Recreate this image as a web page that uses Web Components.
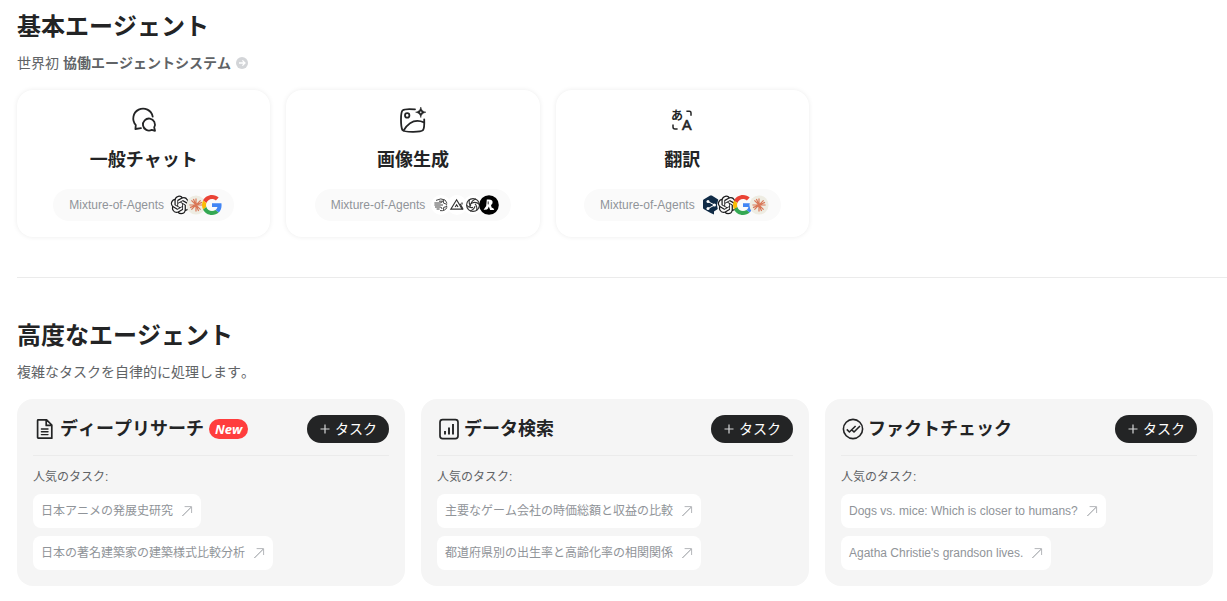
<!DOCTYPE html>
<html lang="ja">
<head>
<meta charset="utf-8">
<meta name="viewport" content="width=device-width, initial-scale=1">
<title>エージェント</title>
<style>
  body {
    margin: 0;
    background: #fff;
    color: #232425;
    font-family: "Liberation Sans", "Noto Sans CJK JP", sans-serif;
    font-size: 14px;
    font-kerning: none;
  }
</style>
</head>
<body>
<agents-page></agents-page>

<script>
const ICONS = {
  chat: ['0 0 30 30', `<g fill="none" stroke="#232425" stroke-width="1.8" stroke-linecap="round" stroke-linejoin="round">
    <path d="M23.7 11.6A9.8 9.8 0 1 0 6.8 20L6.4 24L12 23.2"/>
    <path d="M25.2 22.4A6 6 0 1 0 22.8 24.8L26 25.8Z"/></g>`],
  image: ['0 0 30 30', `<g fill="none" stroke="#232425" stroke-width="1.8" stroke-linecap="round" stroke-linejoin="round">
    <path d="M17 4.4C11 3.8 6.4 4 4.6 5.4C2.4 7.4 2.6 21.4 4.4 25C6.4 27.4 22.6 27.6 25 25.2C26.4 23.4 26.4 18.6 26.2 14.4"/>
    <path d="M5.6 25.4C10 18.4 17 13.4 26 17.4"/><circle cx="9.2" cy="10.4" r="2.2"/></g>
    <path fill="#232425" stroke="#232425" stroke-width=".5" fill-rule="evenodd" d="M22.8 2C23.4 5.2 24.6 6.4 28 7.2C24.6 8 23.4 9.2 22.8 12.6C22.2 9.2 21 8 17.6 7.2C21 6.4 22.2 5.2 22.8 2ZM22.8 6L21.6 7.2L22.8 8.5L24 7.2Z"/>`],
  translate: ['0 0 30 30', `<text x="4" y="15" font-size="12" font-weight="700" fill="#232425" font-family="Noto Sans CJK JP, sans-serif">あ</text>
    <text x="15" y="25" font-size="15" font-weight="400" fill="#232425" stroke="#232425" stroke-width=".6" font-family="Noto Sans, sans-serif">A</text>
    <path d="M19.4 6.2H22.4Q24 6.2 24 7.8V10.8M6 19.4V22Q6 24 8 24H10.6" fill="none" stroke="#232425" stroke-width="1.5"/>`],
  file: ['0 0 24 24', `<g fill="none" stroke="#232425" stroke-width="1.7" stroke-linejoin="round" stroke-linecap="round">
    <path d="M5.2 2.8H13.6L18.8 8V21.2H5.2Q4.6 21.2 4.6 20.6V3.4Q4.6 2.8 5.2 2.8ZM13.2 3V8.4H18.6"/><path stroke-width="1.4" d="M8.4 12H15M8.4 14.8H15M8.4 17.6H15"/></g>`],
  chart: ['0 0 24 24', `<rect x="3" y="2.6" width="18" height="19" rx="2.6" fill="none" stroke="#232425" stroke-width="1.7"/>
    <path d="M8 14V17.4M12 10.6V17.4M16 7V17.4" stroke="#232425" stroke-width="1.9"/>`],
  check: ['0 0 24 24', `<circle cx="12" cy="12" r="9.6" fill="none" stroke="#232425" stroke-width="1.6"/>
    <path d="M5.8 12.4L8.4 15L14.6 9M11.2 13.2L13 15L19 9" fill="none" stroke="#232425" stroke-width="1.6" stroke-linejoin="round"/>`],
  plus: ['0 0 12 12', `<path d="M6 1.5V10.5M1.5 6H10.5" stroke="#d5d6d7" stroke-width="1.2"/>`],
  diagonal: ['0 0 12 12', `<path d="M1.4 11L10.4 2" stroke="#909499" stroke-width="1"/><path d="M3.6 1.6H10.6V8" fill="none" stroke="#b4b7ba" stroke-width="1"/>`],
  go: ['0 0 12 12', `<circle cx="6" cy="6" r="6" fill="#d3d5d8"/><path d="M3 6H9M6.4 3.4L9 6L6.4 8.6" fill="none" stroke="#fff" stroke-width="1.3"/>`],
  openai: ['0 0 20 20', `<circle cx="10" cy="10" r="10" fill="#fafafa"/><g transform="translate(.8 .6) scale(.78)"><path fill="#1b1b1c" d="M22.2819 9.8211a5.9847 5.9847 0 0 0-.5157-4.9108 6.0462 6.0462 0 0 0-6.5098-2.9A6.0651 6.0651 0 0 0 4.9807 4.1818a5.9847 5.9847 0 0 0-3.9977 2.9 6.0462 6.0462 0 0 0 .7427 7.0966 5.98 5.98 0 0 0 .511 4.9107 6.051 6.051 0 0 0 6.5146 2.9001A5.9847 5.9847 0 0 0 13.2599 24a6.0557 6.0557 0 0 0 5.7718-4.2058 5.9894 5.9894 0 0 0 3.9977-2.9001 6.0557 6.0557 0 0 0-.7475-7.0729zm-9.022 12.6081a4.4755 4.4755 0 0 1-2.8764-1.0408l.1419-.0804 4.7783-2.7582a.7948.7948 0 0 0 .3927-.6813v-6.7369l2.02 1.1686a.071.071 0 0 1 .038.052v5.5826a4.504 4.504 0 0 1-4.4945 4.4944zm-9.6607-4.1254a4.4708 4.4708 0 0 1-.5346-3.0137l.142.0852 4.783 2.7582a.7712.7712 0 0 0 .7806 0l5.8428-3.3685v2.3324a.0804.0804 0 0 1-.0332.0615L9.74 19.9502a4.4992 4.4992 0 0 1-6.1408-1.6464zM2.3408 7.8956a4.485 4.485 0 0 1 2.3655-1.9728V11.6a.7664.7664 0 0 0 .3879.6765l5.8144 3.3543-2.0201 1.1685a.0757.0757 0 0 1-.071 0l-4.8303-2.7865A4.504 4.504 0 0 1 2.3408 7.872zm16.5963 3.8558L13.1038 8.364 15.1192 7.2a.0757.0757 0 0 1 .071 0l4.8303 2.7913a4.4944 4.4944 0 0 1-.6765 8.1042v-5.6772a.79.79 0 0 0-.407-.667zm2.0107-3.0231l-.142-.0852-4.7735-2.7818a.7759.7759 0 0 0-.7854 0L9.409 9.2297V6.8974a.0662.0662 0 0 1 .0284-.0615l4.8303-2.7866a4.4992 4.4992 0 0 1 6.6802 4.66zM8.3065 12.863l-2.02-1.1638a.0804.0804 0 0 1-.038-.0567V6.0742a4.4992 4.4992 0 0 1 7.3757-3.4537l-.142.0805L8.704 5.459a.7948.7948 0 0 0-.3927.6813zm1.0976-2.3654l2.602-1.4998 2.6069 1.4998v2.9994l-2.5974 1.4997-2.6067-1.4997Z"/></g>`],
  claude: ['0 0 20 20', `<circle cx="10" cy="10" r="9.6" fill="#eeece2"/>
    <path d="M10 3.4V16.6M3.4 10H16.6M5.4 5.4L14.6 14.6M14.6 5.4L5.4 14.6M7.4 4L12.6 16M16 7.4L4 12.6" stroke="#d97757" stroke-width="1.2"/>`],
  google: ['0 0 48 48', `<path fill="#EA4335" d="M24 9.5c3.54 0 6.71 1.22 9.21 3.6l6.85-6.85C35.9 2.38 30.47 0 24 0 14.62 0 6.51 5.38 2.56 13.22l7.98 6.19C12.43 13.72 17.74 9.5 24 9.5z"/>
    <path fill="#4285F4" d="M46.98 24.55c0-1.57-.15-3.09-.38-4.55H24v9.02h12.94c-.58 2.96-2.26 5.48-4.78 7.18l7.73 6c4.51-4.18 7.09-10.36 7.09-17.65z"/>
    <path fill="#FBBC05" d="M10.53 28.59c-.48-1.45-.76-2.99-.76-4.59s.27-3.14.76-4.59l-7.98-6.19C.92 16.46 0 20.12 0 24c0 3.88.92 7.54 2.56 10.78l7.97-6.19z"/>
    <path fill="#34A853" d="M24 48c6.48 0 11.93-2.13 15.89-5.81l-7.73-6c-2.15 1.45-4.92 2.3-8.16 2.3-6.26 0-11.57-4.22-13.47-9.91l-7.98 6.19C6.51 42.62 14.62 48 24 48z"/>`],
  waves: ['0 0 20 20', `<circle cx="10" cy="10" r="10" fill="#fff"/><g fill="none" stroke="#444" stroke-width="1">
    <path d="M5 5.4Q10 2.6 14 5Q17.4 8 16 12.4Q14 16.4 9 15.6M3.4 8H9Q11 8 11 6.4M3.4 10H12M4 12H9Q11 12 11 14M5.6 14H8.6"/><path d="M12.4 5V8L16 9.4M12.6 15V12.4L16.4 11.4M8 6.2H12"/></g>`],
  triangle: ['0 0 20 20', `<circle cx="10" cy="10" r="10" fill="#fff"/><g fill="none" stroke="#333" stroke-width="1.2">
    <path d="M3.8 14.2L9.6 4.8L15.2 14.2Z"/><path d="M8.2 12L9.6 9.8L11 12M13 8.8L16.2 14.4M15 7.4V9.6"/></g>`],
  spiral: ['0 0 20 20', `<circle cx="10" cy="10" r="10" fill="#fff"/><g fill="none" stroke="#333" stroke-width="1.1"><circle cx="10" cy="10" r="6.4"/>
    <path d="M10 7.6Q13.4 6.6 16.6 9.6M10 7.6Q6.8 8.4 6.8 12"/><path d="M12 8.8Q14.6 11.2 13.6 15.6M12 11.2Q11.2 14.6 7 16M10 12.4Q6.6 13.4 3.6 10.4M8 11.2Q5.4 8.8 6.4 4.4M8 8.8Q8.8 5.4 13 4"/></g>`],
  person: ['0 0 20 20', `<circle cx="10" cy="10" r="9.8" fill="#000"/>
    <path fill="#fff" d="M7.8 4.6Q13.6 3.6 13.6 7.2Q13.6 9.2 12 10L12.6 12.4Q14.8 12.6 15.2 15H11.2L9.8 11.4L9 13.6Q8.6 15 4.6 14.8L7.2 11Z"/><path d="M9.2 6.4V9.4" stroke="#000" stroke-width=".8"/>`],
  hexagon: ['0 0 20 20', `<path fill="#102b46" d="M9.2 .6Q10 .2 10.8 .6L17.2 4.4V13.8L13 16.4V19.4L9.6 18L2.6 14Q2 13.6 2 12.8V5.6Q2 4.8 2.6 4.4Z"/>
    <path d="M7 6.6L13.6 10L7 13.6" fill="none" stroke="#fff" stroke-width="1"/><g fill="#fff"><circle cx="7" cy="6.4" r="1.5"/><circle cx="13.4" cy="10" r="1.6"/><circle cx="7" cy="13.4" r="1.5"/></g>`]
};

class AppIcon extends HTMLElement {
  connectedCallback() {
    const [box, art] = ICONS[this.getAttribute('name')];
    const root = this.shadowRoot || this.attachShadow({ mode: 'open' });
    root.innerHTML = `<style>
      :host { display: block; flex: none; width: var(--icon-size, 20px); height: var(--icon-size, 20px); }
      svg { display: block; width: 100%; height: 100%; }
    </style><svg viewBox="${box}" aria-hidden="true">${art}</svg>`;
  }
}
customElements.define('app-icon', AppIcon);

class AgentSection extends HTMLElement {
  constructor() {
    super();
    this.attachShadow({ mode: 'open' }).innerHTML = `<style>
      :host { display: block; padding-right: 14px; }
      h2 { margin: 0; font-size: 24px; line-height: 36px; font-weight: 700; }
      .sub { display: flex; align-items: center; margin: 8px 0 17px; color: #606366; font-size: 14px; line-height: 20px; }
      .grid { display: grid; grid-template-columns: repeat(3, minmax(0, 1fr)); gap: 16px; }
    </style>
    <h2><slot name="heading"></slot></h2>
    <div class="sub"><slot name="sub"></slot></div>
    <div class="grid"><slot></slot></div>`;
  }
}
customElements.define('agent-section', AgentSection);

class SystemLink extends HTMLElement {
  constructor() {
    super();
    this.attachShadow({ mode: 'open' }).innerHTML = `<style>
      :host { display: block; --icon-size: 12px; }
      p { margin: 0; display: flex; gap: 4px; }
      a { display: flex; align-items: center; gap: 5px; color: inherit; font-weight: 700; text-decoration: none; }
    </style>
    <p><span>世界初</span> <a href="#system">協働エージェントシステム<app-icon name="go"></app-icon></a></p>`;
  }
}
customElements.define('system-link', SystemLink);

class BasicAgents extends HTMLElement {
  constructor() {
    super();
    this.attachShadow({ mode: 'open' }).innerHTML = `<style>
      :host { display: grid; grid-column: span 2; grid-template-columns: repeat(3, minmax(0, 1fr)); gap: 16px; }
    </style><slot></slot>`;
  }
}
customElements.define('basic-agents', BasicAgents);

class BasicCard extends HTMLElement {
  connectedCallback() {
    const models = this.getAttribute('models').split(' ');
    const root = this.shadowRoot || this.attachShadow({ mode: 'open' });
    root.innerHTML = `<style>
      :host { display: block; }
      a { display: flex; flex-direction: column; align-items: center; padding: 15px 16px 16px; border-radius: 16px;
          background: #fff; box-shadow: 0 0 5px rgba(0, 0, 0, .08); color: #232425; text-decoration: none; }
      .main { --icon-size: 30px; }
      h3 { margin: 13px 0 17px; font-size: 18px; line-height: 24px; font-weight: 700; }
      .mix { display: flex; align-items: center; gap: 6px; padding: 6px 12px 6px 16px; border-radius: 16px;
             background: #fafafa; color: #909499; font-size: 12px; line-height: 20px; white-space: nowrap; }
      .models { display: flex; }
      .models app-icon + app-icon { margin-left: -4px; }
    </style>
    <a href="#agent">
      <app-icon class="main" name="${this.getAttribute('icon')}"></app-icon>
      <h3><slot></slot></h3>
      <div class="mix"><span>Mixture-of-Agents</span>
        <div class="models">${models.map(m => `<app-icon name="${m}"></app-icon>`).join('')}</div>
      </div>
    </a>`;
  }
}
customElements.define('basic-card', BasicCard);

class NewBadge extends HTMLElement {
  constructor() {
    super();
    this.attachShadow({ mode: 'open' }).innerHTML = `<style>
      :host { display: block; padding: 0 6px; border-radius: 10px; background: #ff3d3d; color: #fff;
              font: italic 700 13px/20px "Open Sans", sans-serif; }
    </style><slot></slot>`;
  }
}
customElements.define('new-badge', NewBadge);

class TaskCard extends HTMLElement {
  connectedCallback() {
    const root = this.shadowRoot || this.attachShadow({ mode: 'open' });
    root.innerHTML = `<style>
      :host { display: block; box-sizing: border-box; padding: 16px; border-radius: 16px; background: #f5f5f5; }
      header { display: flex; align-items: center; gap: 3px; padding-bottom: 12px; border-bottom: 1px solid #ebebeb; }
      header > app-icon { --icon-size: 24px; }
      h3 { margin: 0 2px 0 0; font-size: 18px; line-height: 28px; font-weight: 700; white-space: nowrap; }
      button { display: flex; align-items: center; gap: 4px; height: 28px; margin: 0 0 0 auto; padding: 0 12px;
               border: 0; border-radius: 14px; background: #232425; color: #fff; font: inherit; font-size: 14px;
               line-height: 20px; white-space: nowrap; --icon-size: 12px; }
      p { margin: 11px 0 7px; color: #606366; font-size: 12px; line-height: 20px; }
      .list { display: flex; flex-direction: column; align-items: flex-start; gap: 8px; }
    </style>
    <header>
      <app-icon name="${this.getAttribute('icon')}"></app-icon>
      <h3><slot name="name"></slot></h3>
      <slot name="badge"></slot>
      <button type="button"><app-icon name="plus"></app-icon>タスク</button>
    </header>
    <p>人気のタスク:</p>
    <div class="list"><slot></slot></div>`;
  }
}
customElements.define('task-card', TaskCard);

class TaskLink extends HTMLElement {
  constructor() {
    super();
    this.attachShadow({ mode: 'open' }).innerHTML = `<style>
      :host { display: block; --icon-size: 12px; }
      a { display: flex; align-items: center; gap: 8px; padding: 8px; border-radius: 8px; background: #fff;
          color: #909499; font-size: 12px; line-height: 18px; text-decoration: none; }
    </style><a href="#task"><span><slot></slot></span><app-icon name="diagonal"></app-icon></a>`;
  }
}
customElements.define('task-link', TaskLink);

class AgentsPage extends HTMLElement {
  constructor() {
    super();
    this.attachShadow({ mode: 'open' }).innerHTML = `<style>
      :host { display: block; }
      main { padding: 9px 0 15px 17px; }
      hr { margin: 40px 0; border: 0; border-top: 1px solid #ebebeb; }
    </style>
    <main>
      <agent-section>
        <span slot="heading">基本エージェント</span>
        <system-link slot="sub"></system-link>
        <basic-agents>
          <basic-card icon="chat" models="openai claude google">一般チャット</basic-card>
          <basic-card icon="image" models="waves triangle spiral person">画像生成</basic-card>
          <basic-card icon="translate" models="hexagon openai google claude">翻訳</basic-card>
        </basic-agents>
      </agent-section>
      <hr>
      <agent-section>
        <span slot="heading">高度なエージェント</span>
        <span slot="sub">複雑なタスクを自律的に処理します。</span>
        <task-card icon="file">
          <span slot="name">ディープリサーチ</span>
          <new-badge slot="badge">New</new-badge>
          <task-link>日本アニメの発展史研究</task-link>
          <task-link>日本の著名建築家の建築様式比較分析</task-link>
        </task-card>
        <task-card icon="chart">
          <span slot="name">データ検索</span>
          <task-link>主要なゲーム会社の時価総額と収益の比較</task-link>
          <task-link>都道府県別の出生率と高齢化率の相関関係</task-link>
        </task-card>
        <task-card icon="check">
          <span slot="name">ファクトチェック</span>
          <task-link>Dogs vs. mice: Which is closer to humans?</task-link>
          <task-link>Agatha Christie's grandson lives.</task-link>
        </task-card>
      </agent-section>
    </main>`;
  }
}
customElements.define('agents-page', AgentsPage);
</script>
</body>
</html>
